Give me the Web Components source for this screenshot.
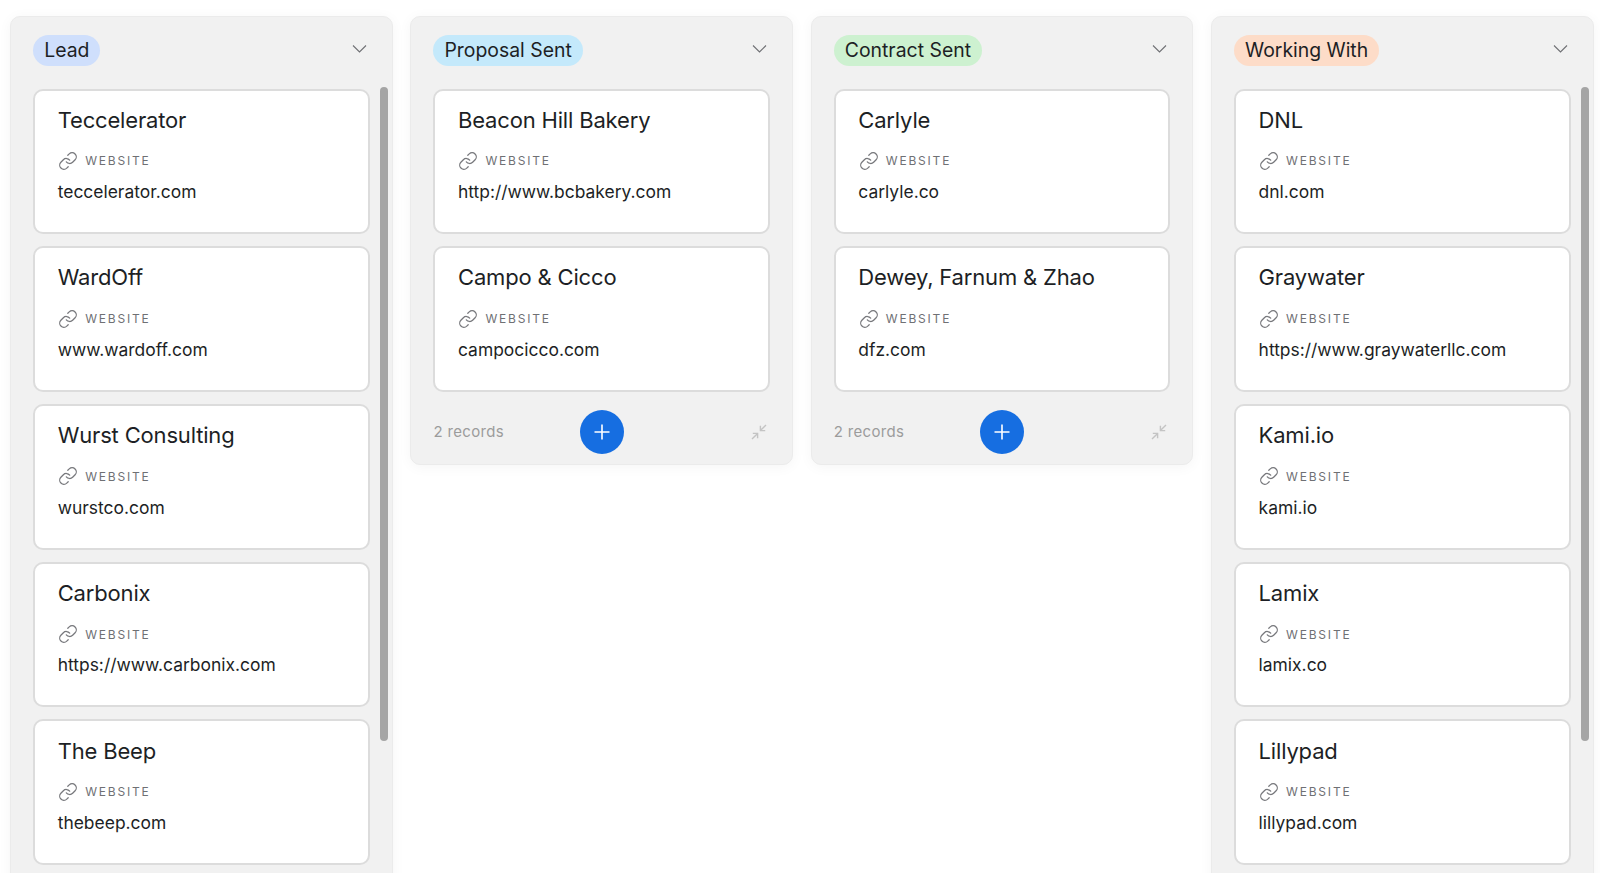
<!DOCTYPE html>
<html lang="en">
<head>
<meta charset="utf-8">
<title>Kanban</title>
<style>
html,body{margin:0;height:873px;overflow:hidden;background:#fff;font-family:Inter,"Liberation Sans",sans-serif}
</style>
</head>
<body>
<kanban-board></kanban-board>
<script>
const LINK=`<svg width="20" height="20" viewBox="0 0 24 24" fill="none" stroke="#77787c" stroke-width="1.5" stroke-linecap="round" stroke-linejoin="round"><path d="M10 13a5 5 0 0 0 7.54.54l3-3a5 5 0 0 0-7.07-7.07l-1.72 1.71"/><path d="M14 11a5 5 0 0 0-7.54-.54l-3 3a5 5 0 0 0 7.07 7.07l1.71-1.71"/></svg>`;

class RecordCard extends HTMLElement{
  connectedCallback(){
    const r=this.shadowRoot||this.attachShadow({mode:'open'});
    r.innerHTML=`<style>
      :host{display:block;box-sizing:border-box;flex:none;height:145.7px;background:#fff;border:2.5px solid #dcdcdc;border-radius:10px;padding:14.3px 22.5px 0 22.5px;color:#1d1f25}
      .t{font-size:22px;line-height:30px;font-weight:400;letter-spacing:-.17px;white-space:nowrap}
      .l{display:flex;align-items:center;gap:7px;margin-top:16.2px;height:20px;font-size:12px;letter-spacing:1.8px;color:#6f7074;padding-left:.5px}
      svg{display:block;flex:none}
      .v{margin-top:9.3px;font-size:17.45px;line-height:24px;white-space:nowrap}
    </style>
    <div class="t"><slot></slot></div>
    <div class="l">${LINK}<span>WEBSITE</span></div>
    <div class="v">${this.getAttribute('url')}</div>`;
  }
}
customElements.define('record-card',RecordCard);

class StatusPill extends HTMLElement{
  connectedCallback(){
    const r=this.shadowRoot||this.attachShadow({mode:'open'});
    r.innerHTML=`<style>
      :host{display:inline-block;height:31px;line-height:31px;padding:0 11px;border-radius:16px;font-size:19.4px;color:#1d1f25;white-space:nowrap;background:var(--pill)}
    </style><slot></slot>`;
  }
}
customElements.define('status-pill',StatusPill);

class RecordFooter extends HTMLElement{
  connectedCallback(){
    const r=this.shadowRoot||this.attachShadow({mode:'open'});
    r.innerHTML=`<style>
      :host{display:grid;grid-template-columns:1fr 44px 1fr;align-items:center;height:44px;margin-top:18px;padding:0 23px 10px 23px;font-size:15px;color:#9c9c9c;letter-spacing:.33px}
      .txt{margin-left:-1px}
      .add{width:44px;height:44px;border-radius:50%;background:#166ee1;display:flex;align-items:center;justify-content:center}
      .end{justify-self:end;display:flex;margin-right:1px}
      svg{display:block}
    </style>
    <span class="txt"><slot></slot></span>
    <span class="add"><svg width="18" height="18" viewBox="0 0 18 18" fill="none" stroke="#fff" stroke-width="1.6"><path d="M9 1.5v15M1.5 9h15"/></svg></span>
    <span class="end"><svg width="18" height="18" viewBox="0 0 18 18" fill="none" stroke="#c4c4c4" stroke-width="1.4"><path d="M16 2l-5.6 5.6M10.4 2.8v4.8h4.8M2 16l5.6-5.6M7.6 15.2v-4.8H2.8"/></svg></span>`;
  }
}
customElements.define('record-footer',RecordFooter);

class KanbanColumn extends HTMLElement{
  connectedCallback(){
    const r=this.shadowRoot||this.attachShadow({mode:'open'});
    const scroll=this.hasAttribute('scroll');
    r.innerHTML=`<style>
      :host{display:block;position:relative;box-sizing:border-box;flex:none;width:382.5px;background:#f1f1f1;border:1px solid #ebebeb;border-radius:10px;box-shadow:0 2px 14px rgba(0,0,0,.045);--pill:${this.getAttribute('color')}}
      header{display:flex;align-items:flex-start;justify-content:space-between;padding:18px 25px 0 22px;height:54px;box-sizing:content-box}
      header svg{display:block;margin-top:9px}
      .list{display:flex;flex-direction:column;gap:12px;padding:0 22px 0 22px}
      :host([scroll]) .list{padding-bottom:40px}
      .bar{position:absolute;left:368.5px;top:70.5px;width:8px;height:654px;background:#a5a5a5;border-radius:4px}
    </style>
    <header><status-pill>${this.getAttribute('label')}</status-pill>
      <svg width="15" height="10" viewBox="0 0 15 10" fill="none" stroke="#6f7074" stroke-width="1.1"><path d="M1 1.5l6.5 6.5L14 1.5"/></svg></header>
    <div class="list"><slot></slot></div>
    <slot name="footer"></slot>
    ${scroll?'<div class="bar"></div>':''}`;
  }
}
customElements.define('kanban-column',KanbanColumn);

const DATA=[
 {label:'Lead',color:'#cfdffc',scroll:1,items:[['Teccelerator','teccelerator.com'],['WardOff','www.wardoff.com'],['Wurst Consulting','wurstco.com'],['Carbonix','https://www.carbonix.com'],['The Beep','thebeep.com']]},
 {label:'Proposal Sent',color:'#c4e9fb',items:[['Beacon Hill Bakery','http://www.bcbakery.com'],['Campo &amp; Cicco','campocicco.com']],footer:'2 records'},
 {label:'Contract Sent',color:'#cdf1d0',items:[['Carlyle','carlyle.co'],['Dewey, Farnum &amp; Zhao','dfz.com']],footer:'2 records'},
 {label:'Working With',color:'#fddcc8',scroll:1,items:[['DNL','dnl.com'],['Graywater','https://www.graywaterllc.com'],['Kami.io','kami.io'],['Lamix','lamix.co'],['Lillypad','lillypad.com']]}
];

class KanbanBoard extends HTMLElement{
  connectedCallback(){
    const r=this.shadowRoot||this.attachShadow({mode:'open'});
    r.innerHTML=`<style>
      :host{display:flex;align-items:flex-start;gap:17.8px;padding:15.5px 0 0 10.2px;height:873px;box-sizing:border-box;overflow:hidden}
    </style>`+DATA.map(c=>`<kanban-column label="${c.label}" color="${c.color}" ${c.scroll?'scroll':''}>
      ${c.items.map(i=>`<record-card url="${i[1]}">${i[0]}</record-card>`).join('')}
      ${c.footer?`<record-footer slot="footer">${c.footer}</record-footer>`:''}
    </kanban-column>`).join('');
  }
}
customElements.define('kanban-board',KanbanBoard);
</script>
</body>
</html>
